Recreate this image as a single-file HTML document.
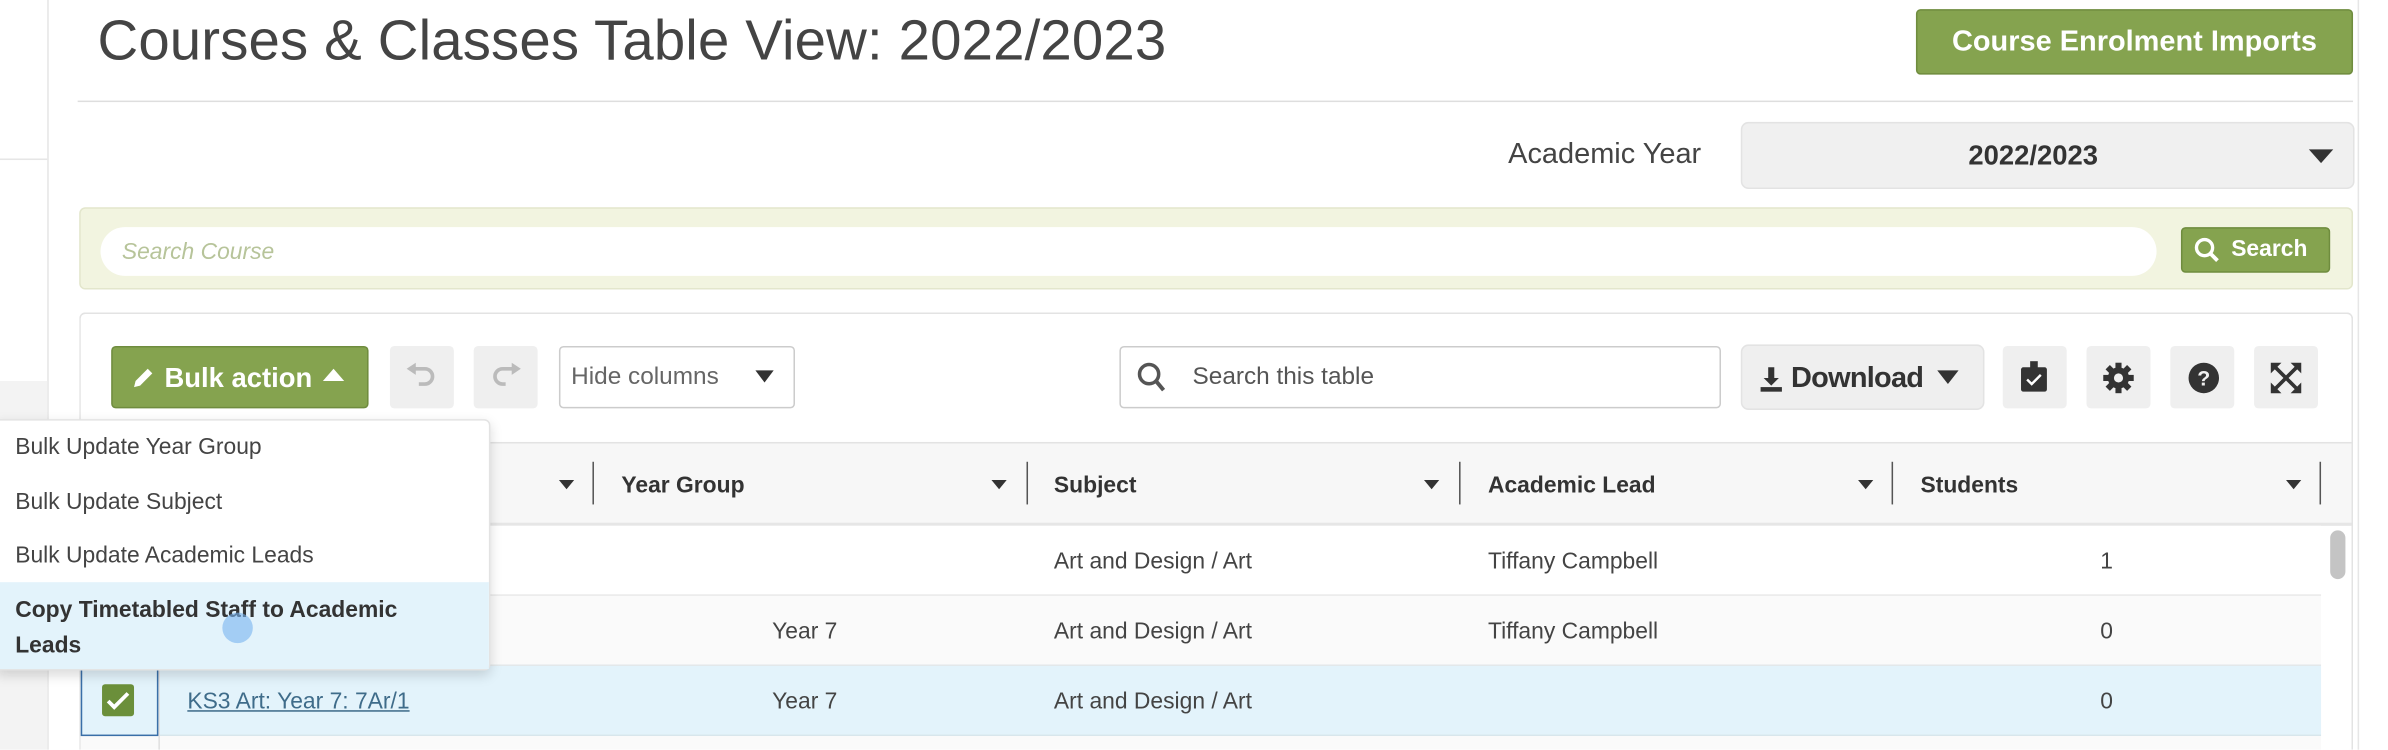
<!DOCTYPE html>
<html><head><meta charset="utf-8"><style>
html,body{margin:0;padding:0;background:#fff;overflow:hidden;width:2388px;height:750px}
#w{position:absolute;left:0;top:0;width:1568px;height:492px;overflow:hidden;transform:scale(1.523,1.524);transform-origin:0 0;font-family:"Liberation Sans",sans-serif;color:#444}
.a{position:absolute}
.btn{position:absolute;border-radius:3px;box-sizing:border-box}
.g{background:#85a34f;color:#fff;font-weight:bold;border:1px solid #6f8c3e}
.gr{background:#efefef}
.t{position:absolute;font-size:15px;white-space:nowrap}
.h{position:absolute;font-size:15px;font-weight:bold;color:#333;white-space:nowrap}
.sep{position:absolute;width:1px;height:28px;background:#555;top:303px}
.arr{position:absolute;width:0;height:0;border-left:5px solid transparent;border-right:5px solid transparent;border-top:6px solid #333;top:315px}
</style></head><body><div id="w">
<div class="a" style="left:0;top:0;width:31px;height:492px;background:#fff;border-right:1px solid #e6e6e6"></div>
<div class="a" style="left:0;top:104px;width:31px;height:1px;background:#e6e6e6"></div>
<div class="a" style="left:0;top:250px;width:31px;height:242px;background:#f3f3f3"></div>
<div class="a" style="left:1548px;top:0;width:1px;height:492px;background:#e6e6e6"></div>

<div class="t" style="left:64px;top:6px;font-size:37px;color:#444;letter-spacing:0.1px">Courses &amp; Classes Table View: 2022/2023</div>
<div class="btn g" style="left:1258px;top:6px;width:287px;height:43px;font-size:19px;line-height:41px;text-align:center">Course Enrolment Imports</div>
<div class="a" style="left:51px;top:66px;width:1494px;height:1px;background:#dedede"></div>

<div class="t" style="left:960px;top:91px;width:157px;text-align:right;font-size:19px;color:#444">Academic Year</div>
<div class="btn" style="left:1143px;top:80px;width:403px;height:44px;background:#f0f0f0;border:1px solid #e3e3e3;border-radius:5px"></div>
<div class="t" style="left:1143px;top:92px;width:384px;text-align:center;font-size:18px;font-weight:bold;color:#333">2022/2023</div>
<div class="a" style="left:1516px;top:98px;border-left:8px solid transparent;border-right:8px solid transparent;border-top:9px solid #333"></div>

<div class="a" style="left:52px;top:136px;width:1493px;height:54px;background:#f2f4e0;border:1px solid #e3e6cc;border-radius:4px;box-sizing:border-box"></div>
<div class="a" style="left:66px;top:149px;width:1350px;height:32px;background:#fff;border-radius:16px"></div>
<div class="t" style="left:80px;top:157px;font-style:italic;color:#b7c49a;font-size:15px">Search Course</div>
<div class="btn g" style="left:1432px;top:149px;width:98px;height:30px;font-size:15px;line-height:28px;padding-left:32px">Search</div>
<svg class="a" style="left:1440px;top:155px" width="18" height="18" viewBox="0 0 18 18"><circle cx="7.5" cy="7.5" r="5.3" fill="none" stroke="#fff" stroke-width="2.2"/><path d="M11 11l5 5" stroke="#fff" stroke-width="2.5"/></svg>

<div class="a" style="left:52px;top:205px;width:1493px;height:287px;background:#fff;border:1px solid #e3e3e3;border-bottom:none;border-radius:4px 4px 0 0;box-sizing:border-box"></div>

<div class="btn g" style="left:73px;top:227px;width:169px;height:41px;font-size:18px;line-height:41px;padding-left:34px">Bulk action</div>
<svg class="a" style="left:85px;top:239px" width="18" height="18" viewBox="0 0 18 18"><path d="M3 15l1-4 8-8 3 3-8 8z" fill="#fff"/></svg>
<div class="a" style="left:212px;top:242px;border-left:7px solid transparent;border-right:7px solid transparent;border-bottom:8px solid #fff"></div>
<div class="btn gr" style="left:256px;top:227px;width:42px;height:41px"></div>
<svg class="a" style="left:265px;top:237px" width="24" height="22" viewBox="0 0 24 22"><path d="M6 5h8a5 5 0 010 10h-4" fill="none" stroke="#bbb" stroke-width="2.4"/><path d="M2 5l6-4v8z" fill="#bbb"/></svg>
<div class="btn gr" style="left:311px;top:227px;width:42px;height:41px"></div>
<svg class="a" style="left:320px;top:237px" width="24" height="22" viewBox="0 0 24 22"><path d="M18 5h-8a5 5 0 000 10h2" fill="none" stroke="#bbb" stroke-width="2.4"/><path d="M22 5l-6-4v8z" fill="#bbb"/></svg>
<div class="btn" style="left:367px;top:227px;width:155px;height:41px;border:1px solid #ccc"></div>
<div class="t" style="left:375px;top:239px;font-size:16px;color:#666">Hide columns</div>
<div class="a" style="left:496px;top:243px;border-left:6px solid transparent;border-right:6px solid transparent;border-top:8px solid #333"></div>

<div class="btn" style="left:735px;top:227px;width:395px;height:41px;border:1px solid #ccc"></div>
<svg class="a" style="left:746px;top:237px" width="20" height="22" viewBox="0 0 20 22"><circle cx="8.5" cy="8.5" r="6.3" fill="none" stroke="#555" stroke-width="2.3"/><path d="M13 13l5 6" stroke="#555" stroke-width="2.6"/></svg>
<div class="t" style="left:783px;top:239px;font-size:16px;color:#555">Search this table</div>
<div class="btn gr" style="left:1143px;top:226px;width:160px;height:43px;border:1px solid #e3e3e3;border-radius:5px"></div>
<svg class="a" style="left:1155px;top:240px" width="16" height="18" viewBox="0 0 16 18"><path d="M6 1h4v7h3l-5 5-5-5h3z" fill="#333"/><rect x="1" y="14" width="14" height="3" fill="#333"/></svg>
<div class="t" style="left:1176px;top:238px;font-size:19px;font-weight:bold;color:#333;letter-spacing:-0.5px">Download</div>
<div class="a" style="left:1272px;top:243px;border-left:7px solid transparent;border-right:7px solid transparent;border-top:9px solid #333"></div>
<div class="btn gr" style="left:1315px;top:227px;width:42px;height:41px"></div>
<svg class="a" style="left:1325px;top:235px" width="22" height="24" viewBox="0 0 22 24"><rect x="2" y="6" width="17" height="16" rx="1.5" fill="#333"/><rect x="8" y="2" width="5" height="6" fill="#333"/><path d="M6 14l3 3 6-6" fill="none" stroke="#fff" stroke-width="1.6"/></svg>
<div class="btn gr" style="left:1370px;top:227px;width:42px;height:41px"></div>
<svg class="a" style="left:1380px;top:237px" width="22" height="22" viewBox="0 0 22 22"><g fill="#333"><circle cx="11" cy="11" r="7"/><rect x="9" y="1" width="4" height="20"/><rect x="1" y="9" width="20" height="4"/><rect x="9" y="1" width="4" height="20" transform="rotate(45 11 11)"/><rect x="9" y="1" width="4" height="20" transform="rotate(-45 11 11)"/></g><circle cx="11" cy="11" r="3" fill="#efefef"/></svg>
<div class="btn gr" style="left:1425px;top:227px;width:42px;height:41px"></div>
<svg class="a" style="left:1436px;top:237px" width="22" height="22" viewBox="0 0 22 22"><circle cx="11" cy="11" r="10" fill="#333"/><text x="11" y="16" text-anchor="middle" font-family="Liberation Sans" font-weight="bold" font-size="14" fill="#efefef">?</text></svg>
<div class="btn gr" style="left:1480px;top:227px;width:42px;height:41px"></div>
<svg class="a" style="left:1490px;top:237px" width="22" height="22" viewBox="0 0 22 22"><path d="M4 4l14 14M18 4L4 18" stroke="#333" stroke-width="2.4"/><path d="M1 1h7l-7 7zM21 1h-7l7 7zM1 21h7l-7-7zM21 21h-7l7-7z" fill="#333"/></svg>

<div class="a" style="left:53px;top:290px;width:1491px;height:55px;background:#f7f7f7;border-top:1px solid #e3e3e3;border-bottom:2px solid #e6e6e6;box-sizing:border-box"></div>
<div class="arr" style="left:367px"></div><div class="sep" style="left:389px"></div>
<div class="h" style="left:408px;top:310px">Year Group</div><div class="arr" style="left:651px"></div><div class="sep" style="left:674px"></div>
<div class="h" style="left:692px;top:310px">Subject</div><div class="arr" style="left:935px"></div><div class="sep" style="left:958px"></div>
<div class="h" style="left:977px;top:310px">Academic Lead</div><div class="arr" style="left:1220px"></div><div class="sep" style="left:1242px"></div>
<div class="h" style="left:1261px;top:310px">Students</div><div class="arr" style="left:1501px"></div><div class="sep" style="left:1523px"></div>

<div class="a" style="left:53px;top:345px;width:1471px;height:46px;background:#fff;border-bottom:1px solid #e8e8e8;box-sizing:border-box"></div>
<div class="a" style="left:53px;top:391px;width:1471px;height:46px;background:#fafafa;border-bottom:1px solid #e3e8ea;box-sizing:border-box"></div>
<div class="a" style="left:53px;top:437px;width:1471px;height:46px;background:#e3f3fb;border-bottom:1px solid #d8e6ec;box-sizing:border-box"></div>
<div class="a" style="left:53px;top:483px;width:1471px;height:9px;background:#fafafa"></div>
<div class="a" style="left:104px;top:437px;width:1px;height:55px;background:#e0e0e0"></div>
<div class="a" style="left:53px;top:437px;width:51px;height:46px;border:1px solid #3a6fa8;box-sizing:border-box"></div>
<div class="a" style="left:67px;top:449px;width:21px;height:21px;background:#6b8f3a;border-radius:2px"></div>
<svg class="a" style="left:67px;top:449px" width="21" height="21" viewBox="0 0 21 21"><path d="M4 11l4 4 9-9" fill="none" stroke="#fff" stroke-width="2.5"/></svg>
<div class="a" style="left:1530px;top:348px;width:10px;height:32px;background:#c4c4c4;border-radius:5px"></div>

<div class="t" style="left:692px;top:360px">Art and Design / Art</div>
<div class="t" style="left:977px;top:360px">Tiffany Campbell</div>
<div class="t" style="left:1379px;top:360px">1</div>
<div class="t" style="left:507px;top:406px">Year 7</div>
<div class="t" style="left:692px;top:406px">Art and Design / Art</div>
<div class="t" style="left:977px;top:406px">Tiffany Campbell</div>
<div class="t" style="left:1379px;top:406px">0</div>
<div class="t" style="left:123px;top:452px;color:#3f6c8a;text-decoration:underline">KS3 Art: Year 7: 7Ar/1</div>
<div class="t" style="left:507px;top:452px">Year 7</div>
<div class="t" style="left:692px;top:452px">Art and Design / Art</div>
<div class="t" style="left:1379px;top:452px">0</div>

<div class="a" style="left:-2px;top:275px;width:324px;height:165px;background:#fff;border:1px solid #e3e3e3;border-radius:0 4px 4px 0;box-shadow:0 3px 8px rgba(0,0,0,0.15);box-sizing:border-box"></div>
<div class="t" style="left:10px;top:285px;color:#444">Bulk Update Year Group</div>
<div class="t" style="left:10px;top:321px;color:#444">Bulk Update Subject</div>
<div class="t" style="left:10px;top:356px;color:#444">Bulk Update Academic Leads</div>
<div class="a" style="left:0;top:382px;width:321px;height:57px;background:#e3f3fb"></div>
<div class="a" style="left:10px;top:389px;width:280px;font-size:15px;font-weight:bold;color:#333;line-height:23px">Copy Timetabled Staff to Academic Leads</div>
<div class="a" style="left:146px;top:402px;width:20px;height:20px;border-radius:50%;background:rgba(120,180,240,0.6)"></div>
</div></body></html>
